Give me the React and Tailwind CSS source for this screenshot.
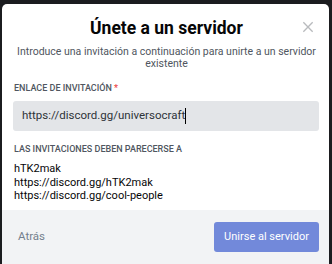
export default function App() {
  return (
    <div className="w-[332px] h-[264px] bg-[#1b1c1f] overflow-hidden pt-[4px] pl-[2px]" style={{ fontFamily: 'Roboto, "Liberation Sans", sans-serif' }}>
      <div className="w-[327px] h-[260px] bg-white rounded-t-[5px] flex flex-col overflow-hidden">
        <div className="relative pl-[12px] pr-[10px] pt-[13px]">
          <h1 className="text-center text-[17.5px] leading-[22px] font-bold text-[#060607]">Únete a un servidor</h1>
          <button className="absolute right-[13px] top-[15px] text-[#b9bbbe]">
            <svg width="16" height="16" viewBox="0 0 24 24" fill="none" stroke="currentColor" strokeWidth="2">
              <path d="M5 5l14 14M19 5L5 19" />
            </svg>
          </button>
          <p className="mt-[7px] text-center text-[10.5px] leading-[12px] text-[#4f5660]">
            Introduce una invitación a continuación para unirte a un servidor
            <br />
            existente
          </p>
          <div className="mt-[12px] text-[9px] leading-[12px] font-medium text-[#4f5660] uppercase">
            Enlace de invitación <span className="text-[#ed4245]">*</span>
          </div>
          <div className="mt-[7px] ml-[-1px] w-[306px] h-[30px] bg-[#e3e5e8] rounded-[3px] flex items-center px-[9px] text-[11.5px] text-[#2e3338]">
            https://discord.gg/universocraft<span className="w-px h-[16px] bg-black"></span>
          </div>
          <div className="mt-[12px] text-[9px] leading-[12px] font-medium text-[#4f5660] uppercase">
            Las invitaciones deben parecerse a
          </div>
          <div className="mt-[7px] text-[11px] leading-[13.5px] text-[#060607]">
            <div>hTK2mak</div>
            <div>https://discord.gg/hTK2mak</div>
            <div>https://discord.gg/cool-people</div>
          </div>
        </div>
        <div className="mt-auto h-[54px] bg-[#f2f3f5] flex items-center justify-between pl-[16px] pr-[10px]">
          <span className="text-[11.5px] text-[#747f8d]">Atrás</span>
          <button className="w-[105px] h-[30px] rounded-[3px] bg-[#7289da] text-white text-[11px]">Unirse al servidor</button>
        </div>
      </div>
    </div>
  );
}
